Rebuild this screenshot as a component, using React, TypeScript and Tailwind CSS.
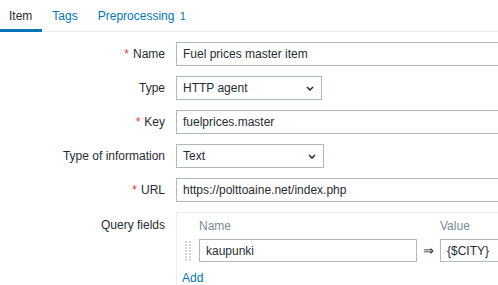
import type { ReactNode } from 'react';

const font = { fontFamily: '"Liberation Sans", Arial, sans-serif' };

function Chevron() {
  return (
    <svg width="8" height="5" viewBox="0 0 8 5" className="shrink-0">
      <path d="M1 1l3 3 3-3" fill="none" stroke="#1f2c33" strokeWidth="1.5" />
    </svg>
  );
}

function DragHandle() {
  const dots = [];
  for (let r = 0; r < 7; r++) {
    dots.push(<rect key={`a${r}`} x="0" y={r * 3} width="2" height="2" fill="#cfd6da" />);
    dots.push(<rect key={`b${r}`} x="4" y={r * 3} width="2" height="2" fill="#cfd6da" />);
  }
  return (
    <svg width="6" height="20" viewBox="0 0 6 20" className="shrink-0">
      {dots}
    </svg>
  );
}

function Label({ children, required, top }: { children: ReactNode; required?: boolean; top?: boolean }) {
  return (
    <div className={`flex justify-end pr-[1px] text-[#1f2c33] ${top ? 'items-start pt-[6px]' : 'items-center'}`}>
      {required && <span className="text-[#e33734] mr-[4px]">*</span>}
      <span>{children}</span>
    </div>
  );
}

function TextBox({ value }: { value: string }) {
  return (
    <div className="w-[400px] h-[24px] border border-[#acbbc2] bg-white px-[6px] flex items-center text-[#1f2c33] whitespace-nowrap">
      {value}
    </div>
  );
}

function Select({ value, width }: { value: string; width: string }) {
  return (
    <div className={`${width} h-[24px] border border-[#acbbc2] bg-white pl-[6px] pr-[7px] flex items-center justify-between text-[#1f2c33]`}>
      <span>{value}</span>
      <Chevron />
    </div>
  );
}

export default function App() {
  return (
    <div className="w-[498px] h-[285px] overflow-hidden bg-white text-[12px] leading-[14px]" style={font}>
      {/* tabs */}
      <div className="flex h-[32px] border-b border-[#ebeef0]">
        <div className="relative pl-[9px] pr-[10px] pt-[9px] text-[#1f2c33]">
          Item
          <div className="absolute left-0 right-0 bottom-[-1px] h-[3px] bg-[#0275b8]" />
        </div>
        <div className="px-[10px] pt-[9px] text-[#0275b8]">Tags</div>
        <div className="px-[10px] pt-[9px] text-[#0275b8]">
          Preprocessing <span className="text-[11px] ml-[2px]">1</span>
        </div>
      </div>

      {/* form */}
      <div className="grid grid-cols-[166px_1fr] gap-x-[10px] gap-y-[10px] mt-[10px]">
        <Label required>Name</Label>
        <TextBox value="Fuel prices master item" />

        <Label>Type</Label>
        <Select value="HTTP agent" width="w-[146px]" />

        <Label required>Key</Label>
        <TextBox value="fuelprices.master" />

        <Label>Type of information</Label>
        <Select value="Text" width="w-[148px]" />

        <Label required>URL</Label>
        <TextBox value="https://polttoaine.net/index.php" />

        <Label top>Query fields</Label>
        <div className="w-[400px] border border-[#ebeef0] pl-[5px] pb-[10px]">
          <div className="flex h-[26px] items-center text-[#768d99]">
            <span className="ml-[17px] w-[241px]">Name</span>
            <span>Value</span>
          </div>
          <div className="flex h-[23px] items-center">
            <div className="ml-[3px] w-[14px]">
              <DragHandle />
            </div>
            <div className="w-[218px] h-[23px] border border-[#acbbc2] px-[6px] flex items-center text-[#1f2c33]">kaupunki</div>
            <span className="mx-[6px] w-[11px] text-[#1f2c33] text-[13px]">⇒</span>
            <div className="w-[120px] h-[23px] border border-[#acbbc2] px-[6px] flex items-center text-[#1f2c33]">{'{$CITY}'}</div>
          </div>
          <div className="mt-[9px]">
            <span className="text-[#0275b8] border-b border-dotted border-[#0275b8]">Add</span>
          </div>
        </div>
      </div>
    </div>
  );
}
